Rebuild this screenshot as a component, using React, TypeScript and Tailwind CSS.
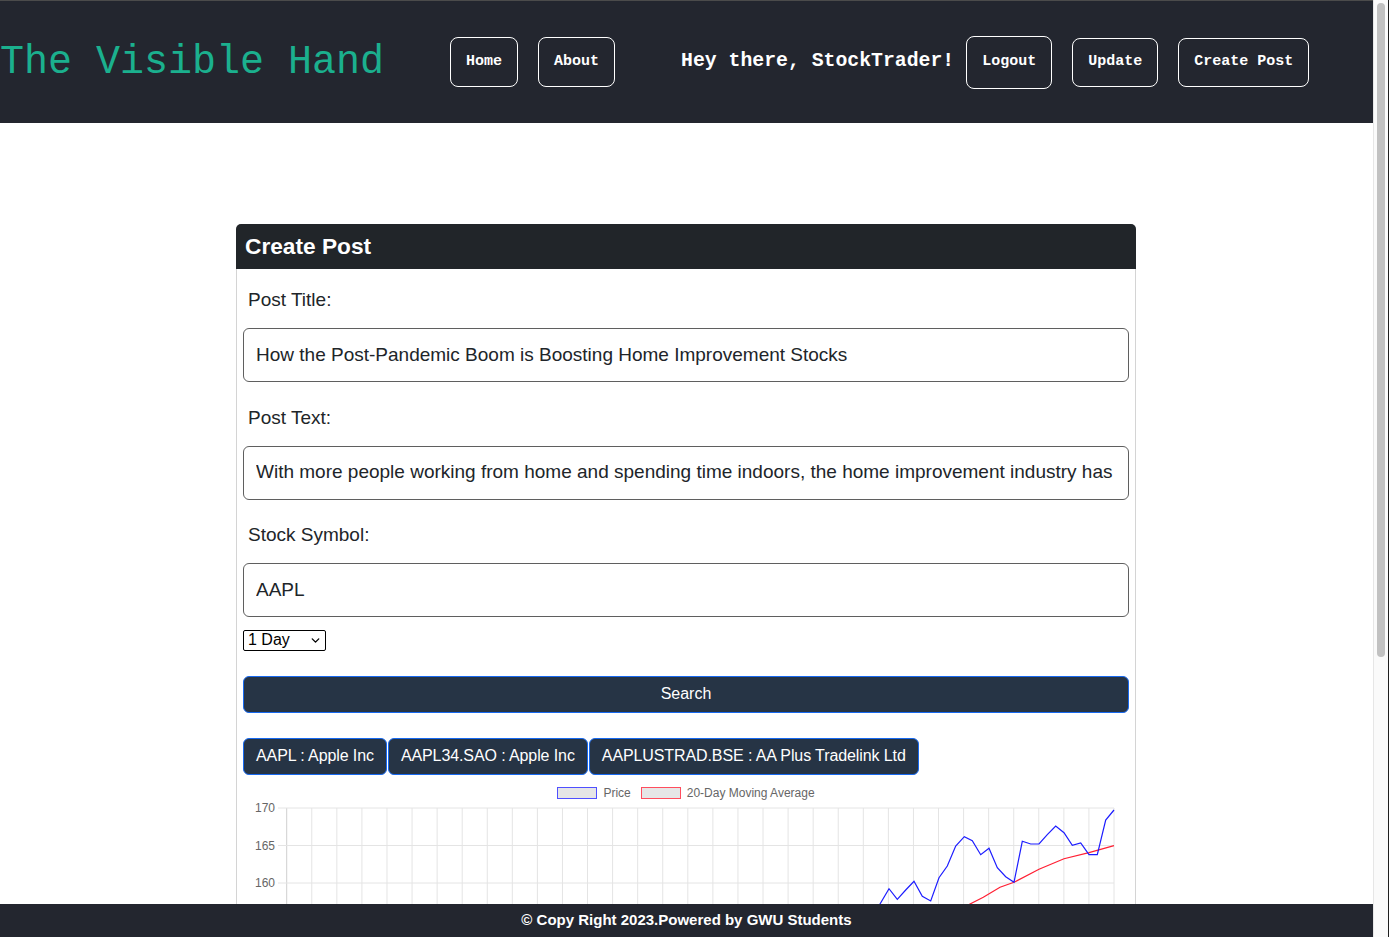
import React from 'react';
import { ChevronDown } from 'lucide-react';

const mono = { fontFamily: '"Liberation Mono", "Courier New", monospace' };

const pricePts: [number, number][] = [
  [560, 150], [570, 140], [580, 146], [590, 132], [600, 138], [612, 125], [620.3, 112], [628.7, 118],
  [637, 104], [646, 88.7], [654.3, 99.3], [662.7, 90], [671, 81.3], [679.3, 96.3], [687.7, 101],
  [696, 77.7], [704.3, 66], [712.7, 46], [721.3, 36.7], [729.3, 40.7], [737.7, 54.7], [746, 48.3],
  [754.3, 67.7], [762.7, 76.7], [771, 82.3], [779.3, 41.3], [787.7, 44], [796, 44], [804.3, 34.7],
  [812.7, 26], [821, 32.7], [829.3, 45.3], [837.7, 43], [846, 54.7], [854.3, 54.7], [862.7, 20], [871, 10],
];

const maPts: [number, number][] = [
  [600, 160], [650, 140], [690, 124], [712, 112], [727, 104], [740.3, 97.3], [757, 87.3], [771, 82.3],
  [796, 69.3], [821, 58.7], [846, 52.7], [871, 45.7],
];

const toPath = (pts: [number, number][]) => pts.map((p, i) => `${i ? 'L' : 'M'}${p[0]} ${p[1]}`).join(' ');

function NavButton({ label, h }: { label: string; h: string }) {
  return (
    <button className={`${h} px-[15px] border border-white rounded-[8px] text-white text-[15px] font-bold`} style={mono}>
      {label}
    </button>
  );
}

function Field({ label, value, first }: { label: string; value: string; first?: boolean }) {
  return (
    <div className={first ? 'mt-[17px]' : 'mt-[21.5px]'}>
      <div className="pl-[5px] text-[19px] leading-[27px] text-[#212529] mb-[15px]">{label}</div>
      <div className="h-[54px] border border-[#5f5f5f] rounded-[6px] px-[12px] flex items-center text-[19px] text-[#212529]">
        <div className="flex-1 overflow-hidden whitespace-nowrap">{value}</div>
      </div>
    </div>
  );
}

function PriceChart() {
  const vLines = Array.from({ length: 34 }, (_, i) => 43.7 + i * ((871 - 43.7) / 33));
  const hLines = [
    { y: 8, label: '170' },
    { y: 45.5, label: '165' },
    { y: 83, label: '160' },
    { y: 120.5, label: '155' },
    { y: 158, label: '150' },
  ];
  return (
    <svg width="886" height="200" className="block">
      {vLines.map((x, i) => (
        <line key={i} x1={x} y1={8} x2={x} y2={200} stroke={i === 0 ? '#cfcfcf' : '#e4e4e4'} strokeWidth="1" />
      ))}
      {hLines.map((h) => (
        <g key={h.label}>
          <line x1={35} y1={h.y} x2={871} y2={h.y} stroke="#e4e4e4" strokeWidth="1" />
          <text x={32} y={h.y + 4} textAnchor="end" fontSize="12" fill="#666" fontFamily="Liberation Sans, Arial, sans-serif">
            {h.label}
          </text>
        </g>
      ))}
      <path d={toPath(maPts)} fill="none" stroke="#ff1f33" strokeWidth="1.2" />
      <path d={toPath(pricePts)} fill="none" stroke="#1c1cff" strokeWidth="1.2" />
    </svg>
  );
}

const stocks = ['AAPL : Apple Inc', 'AAPL34.SAO : Apple Inc', 'AAPLUSTRAD.BSE : AA Plus Tradelink Ltd'];

export default function App() {
  return (
    <div className="flex w-[1389px] h-[937px] overflow-hidden bg-white" style={{ fontFamily: '"Liberation Sans", Arial, sans-serif' }}>
      <div className="w-[1373px] flex flex-col">
        {/* Top nav */}
        <header className="h-[123px] shrink-0 bg-[#23262f] border-t border-[#4b4b4b] flex items-center">
          <h1 className="text-[40px] leading-none text-[#1bb08e] mt-[1px]" style={mono}>The Visible Hand</h1>
          <nav className="flex items-center gap-5 ml-[66px]">
            <NavButton label="Home" h="h-[50px]" />
            <NavButton label="About" h="h-[50px]" />
          </nav>
          <div className="flex items-center ml-[66px]">
            <span className="text-white text-[19.8px] font-bold mr-3" style={mono}>Hey there, StockTrader!</span>
            <div className="flex items-center gap-5">
              <NavButton label="Logout" h="h-[53px]" />
              <NavButton label="Update" h="h-[49px]" />
              <NavButton label="Create Post" h="h-[49px]" />
            </div>
          </div>
        </header>

        {/* Main */}
        <main className="flex-1 overflow-hidden">
          <div className="w-[900px] ml-[236px] mt-[101px] border border-[#d4d4d4] rounded-[6px]">
            <div className="h-[45px] bg-[#212529] rounded-t-[5px] -mx-px -mt-px flex items-center px-[9px]">
              <h3 className="text-white text-[22.7px] font-bold">Create Post</h3>
            </div>
            <div className="px-[6px]">
              <Field first label="Post Title:" value="How the Post-Pandemic Boom is Boosting Home Improvement Stocks" />
              <Field label="Post Text:" value="With more people working from home and spending time indoors, the home improvement industry has seen a boom in demand" />
              <Field label="Stock Symbol:" value="AAPL" />

              <div className="mt-[12.5px] w-[83px] h-[21px] border border-black rounded-[2px] flex items-center justify-between pl-[4px] pr-[3px] text-[16px] text-black">
                <span>1 Day</span>
                <ChevronDown className="w-[13px] h-[13px]" strokeWidth={2.5} />
              </div>

              <button className="mt-[25px] w-full h-[37px] bg-[#263445] border border-[#1769f0] rounded-[6px] text-white text-[16px]">
                Search
              </button>

              <div className="mt-[25px] flex gap-px">
                {stocks.map((s) => (
                  <button key={s} className="h-[37px] px-3 bg-[#263445] border border-[#1769f0] rounded-[6px] text-white text-[16px] tracking-[-0.1px]">
                    {s}
                  </button>
                ))}
              </div>

              <div className="mt-[9px] flex justify-center items-center gap-[10px] text-[12px] text-[#666]">
                <div className="flex items-center gap-[6px]">
                  <span className="w-[40px] h-[12px] bg-[#e6e6e6] border-[1.5px] border-[#5050ff]" />
                  <span>Price</span>
                </div>
                <div className="flex items-center gap-[6px]">
                  <span className="w-[40px] h-[12px] bg-[#e6e6e6] border-[1.5px] border-[#ff4d5e]" />
                  <span>20-Day Moving Average</span>
                </div>
              </div>

              <div className="-mt-[2px]">
                <PriceChart />
              </div>
            </div>
          </div>
        </main>

        {/* Footer */}
        <footer className="h-[33px] shrink-0 bg-[#23262f] flex items-center justify-center text-white text-[15px] font-bold">
          © Copy Right 2023.Powered by GWU Students
        </footer>
      </div>

      {/* Scrollbar */}
      <div className="w-[16px] bg-[#fafafa] border-l border-[#e6e6e6] border-r border-r-[#1e1e1e] pt-[3px] pl-[3px]">
        <div className="w-[8px] h-[654px] rounded-full bg-[#c1c1c1]" />
      </div>
    </div>
  );
}
